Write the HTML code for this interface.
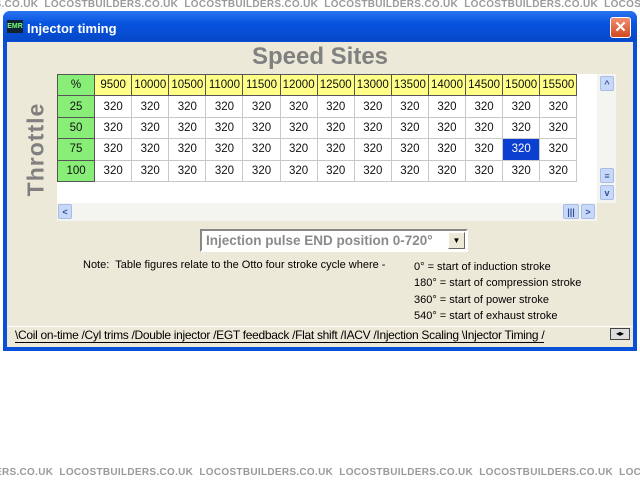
<!DOCTYPE html>
<html><head><meta charset="utf-8"><style>
*{margin:0;padding:0;box-sizing:border-box}
body{width:640px;height:480px;background:#fff;position:relative;overflow:hidden;font-family:"Liberation Sans",sans-serif;font-size:11px}
.wmb{position:absolute;left:0;width:640px;height:12px;overflow:hidden}
.wm{position:absolute;left:-20px;top:0;white-space:nowrap;color:#9a9a9a;font-weight:bold;font-size:10px;letter-spacing:0.3px}
.win{position:absolute;left:3px;top:11px;width:634px;height:340px;background:#0a4fd8;border-radius:7px 7px 0 0}
.title{position:absolute;left:0;top:0;width:634px;height:30px;background:linear-gradient(#2a74f0,#0854e0 40%,#0648c8);border-radius:7px 7px 0 0;color:#fff;font-weight:bold;font-size:13px}
.client{position:absolute;left:4px;top:31px;width:626px;height:305px;background:#ece9d8;overflow:hidden}
.abs{position:absolute}
table{border-collapse:collapse;position:absolute;left:50px;top:32px}
td{width:37.1px;height:21.4px;border:1px solid #c8c8c8;background:#fff;text-align:center;font-size:11.5px;color:#111;padding:0}
td.h{background:#ffff88;border:1px solid #555}
td.g{background:#88ee77;border:1px solid #555}
td.sel{background:#0a3fd0;color:#fff}
.sb{background:#c8d8f8;border:1px solid #a8bce8;border-radius:2px;color:#30509a;font-weight:bold;font-size:9px;text-align:center;line-height:14px}
</style></head><body>
<div class="wmb" style="top:-1px"><div class="wm">ERS.CO.UK &nbsp;LOCOSTBUILDERS.CO.UK &nbsp;LOCOSTBUILDERS.CO.UK &nbsp;LOCOSTBUILDERS.CO.UK &nbsp;LOCOSTBUILDERS.CO.UK &nbsp;LOCOSTBUILDERS.CO.UK</div></div>
<div class="wmb" style="top:467px"><div class="wm" style="left:-5px">ERS.CO.UK &nbsp;LOCOSTBUILDERS.CO.UK &nbsp;LOCOSTBUILDERS.CO.UK &nbsp;LOCOSTBUILDERS.CO.UK &nbsp;LOCOSTBUILDERS.CO.UK &nbsp;LOCOSTBUILDERS.CO.UK</div></div>
<div class="win">
 <div class="title">
  <div class="abs" style="left:4px;top:9px;width:16px;height:13px;background:#123;color:#7f7;font-size:7px;line-height:13px;text-align:center;font-weight:bold">EMR</div>
  <div class="abs" style="left:24px;top:10px">Injector timing</div>
  <div class="abs" style="left:607px;top:6px;width:21px;height:21px;background:linear-gradient(#f09070,#d04820);border:1px solid #fff;border-radius:3px;color:#fff;text-align:center;line-height:19px;font-size:15px">✕</div>
 </div>
 <div class="client">
  <div class="abs" style="left:0;width:626px;top:1px;text-align:center;font-size:24px;font-weight:bold;color:#808080">Speed Sites</div>
  <div class="abs" style="left:-21px;top:94px;width:100px;text-align:center;transform:rotate(-90deg);font-size:23px;font-weight:bold;color:#808080;letter-spacing:1px">Throttle</div>
  <div class="abs" style="left:50px;top:32px;width:540px;height:129px;background:#fff"></div>
  <table>
   <tr><td class="g">%</td><td class="h">9500</td><td class="h">10000</td><td class="h">10500</td><td class="h">11000</td><td class="h">11500</td><td class="h">12000</td><td class="h">12500</td><td class="h">13000</td><td class="h">13500</td><td class="h">14000</td><td class="h">14500</td><td class="h">15000</td><td class="h">15500</td></tr>
   <tr><td class="g">25</td><td>320</td><td>320</td><td>320</td><td>320</td><td>320</td><td>320</td><td>320</td><td>320</td><td>320</td><td>320</td><td>320</td><td>320</td><td>320</td></tr>
   <tr><td class="g">50</td><td>320</td><td>320</td><td>320</td><td>320</td><td>320</td><td>320</td><td>320</td><td>320</td><td>320</td><td>320</td><td>320</td><td>320</td><td>320</td></tr>
   <tr><td class="g">75</td><td>320</td><td>320</td><td>320</td><td>320</td><td>320</td><td>320</td><td>320</td><td>320</td><td>320</td><td>320</td><td>320</td><td class="sel">320</td><td>320</td></tr>
   <tr><td class="g">100</td><td>320</td><td>320</td><td>320</td><td>320</td><td>320</td><td>320</td><td>320</td><td>320</td><td>320</td><td>320</td><td>320</td><td>320</td><td>320</td></tr>
  </table>
  <div class="abs" style="left:590px;top:32px;width:19px;height:129px;background:#f4f4f0"></div>
  <div class="abs" style="left:593px;top:34px;width:14px;height:15px" class="sb"></div>
  <div class="abs sb" style="left:593px;top:34px;width:14px;height:15px">^</div>
  <div class="abs sb" style="left:593px;top:126px;width:14px;height:15px">≡</div>
  <div class="abs sb" style="left:593px;top:143px;width:14px;height:15px">v</div>
  <div class="abs" style="left:50px;top:161px;width:540px;height:18px;background:#f4f4f0"></div>
  <div class="abs sb" style="left:51px;top:162px;width:14px;height:15px">&lt;</div>
  <div class="abs sb" style="left:556px;top:162px;width:16px;height:15px">|||</div>
  <div class="abs sb" style="left:574px;top:162px;width:14px;height:15px">&gt;</div>
  <div class="abs" style="left:193px;top:187px;width:268px;height:23px;background:#fff;border:2px solid;border-color:#888 #fff #fff #888;color:#8a8a8a;font-weight:bold;font-size:13.5px;line-height:19px;padding-left:4px">Injection pulse END position 0-720°
   <div class="abs" style="right:1px;top:1px;width:17px;height:17px;background:#ece9d8;border:1px solid;border-color:#fff #666 #666 #fff;color:#000;font-size:8px;text-align:center;line-height:15px">▼</div></div>
  <div class="abs" style="left:76px;top:217px">Note:&nbsp; Table figures relate to the Otto four stroke cycle where -</div>
  <div class="abs" style="left:407px;top:217px;line-height:16.3px">0° = start of induction stroke<br>180° = start of compression stroke<br>360° = start of power stroke<br>540° = start of exhaust stroke</div>
  <div class="abs" style="left:0;top:284px;width:626px;height:1px;background:#fff"></div>
  <div class="abs" style="left:8px;top:285px;white-space:nowrap;font-size:12px;letter-spacing:-0.3px;border-bottom:1px solid #000;height:16px;line-height:16px">\Coil on-time /Cyl trims /Double injector /EGT feedback /Flat shift /IACV /Injection Scaling \Injector Timing /</div>
  <div class="abs" style="left:603px;top:286px;width:20px;height:12px;background:#ddd;border:1px solid #444;font-size:8px;line-height:10px;text-align:center">◂▸</div>
 </div>
</div>
</body></html>
